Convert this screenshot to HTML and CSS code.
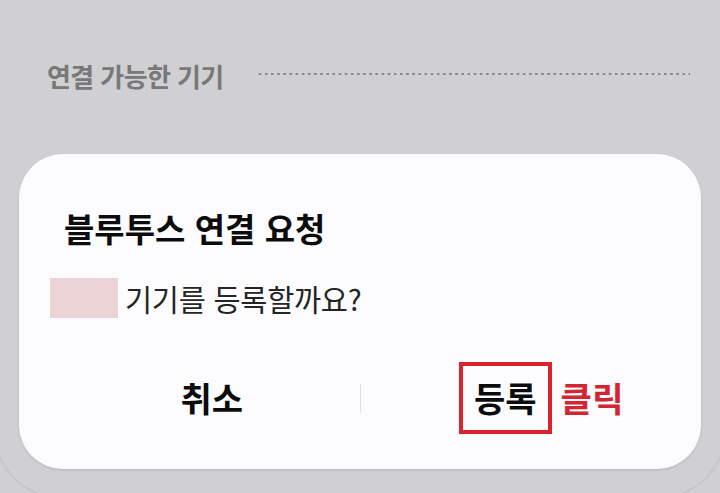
FILE: index.html
```html
<!DOCTYPE html>
<html lang="ko">
<head>
<meta charset="utf-8">
<link rel="stylesheet" href="styles.css">
</head>
<body>
<div class="screen">
  <div class="back-panel"></div>
  <div class="section-head">
    <span class="section-title">연결 가능한 기기</span>
    <span class="dots"></span>
  </div>
  <div class="dialog">
    <div class="dialog-title">블루투스 연결 요청</div>
    <div class="dialog-msg">
      <span class="masked"></span>
      <span class="msg-text">기기를 등록할까요?</span>
    </div>
    <div class="actions">
      <div class="action"><span class="btn">취소</span></div>
      <div class="divider"></div>
      <div class="action"><span class="btn btn-marked">등록<span class="note">클릭</span></span></div>
    </div>
  </div>
</div>
</body>
</html>
```

FILE: styles.css
```css
html, body {
  margin: 0;
  padding: 0;
}
body {
  background: #d0d0d2;
  font-family: "Noto Sans CJK KR", "Noto Sans", sans-serif;
  width: 720px;
  height: 493px;
  overflow: hidden;
}
.screen {
  position: relative;
  width: 720px;
  height: 493px;
  display: flex;
  flex-direction: column;
}
.back-panel {
  position: absolute;
  left: -6px;
  right: -6px;
  top: 0;
  bottom: -5px;
  border-radius: 0 0 70px 70px;
  box-shadow: 0 0 2px rgba(0, 0, 0, 0.2);
  background: #d0d0d2;
}
.section-head {
  position: relative;
  display: flex;
  align-items: center;
  height: 30px;
  margin: 61px 30px 0 47px;
  gap: 33px;
}
.section-title {
  font-size: 26px;
  font-weight: 700;
  color: #78787a;
  letter-spacing: -0.6px;
  line-height: 30px;
  white-space: nowrap;
}
.dots {
  flex: 1;
  height: 4px;
  margin-top: -4px;
  background-image: radial-gradient(circle, #8a8a8c 1.1px, transparent 1.4px);
  background-size: 6.15px 4px;
  background-repeat: repeat-x;
}
.dialog {
  position: relative;
  margin: 63px 0 0 19px;
  width: 682px;
  height: 315px;
  background: #fcfcfe;
  border-radius: 44px;
  box-shadow: 0 1px 3px rgba(0, 0, 0, 0.12);
  display: flex;
  flex-direction: column;
}
.dialog-title {
  padding: 54px 0 0 45px;
  font-size: 33px;
  line-height: 40px;
  font-weight: 700;
  color: #0c0c0c;
  letter-spacing: 0;
}
.dialog-msg {
  display: flex;
  align-items: center;
  margin: 30px 0 0 31px;
  gap: 7px;
}
.masked {
  width: 68px;
  height: 40px;
  background: #ecd3d6;
}
.msg-text {
  font-size: 29.5px;
  line-height: 40px;
  color: #252525;
  letter-spacing: -0.3px;
}
.actions {
  display: flex;
  align-items: center;
  margin-top: 44px;
  padding: 0 45px;
  height: 72px;
}
.action {
  flex: 1;
  display: flex;
  justify-content: center;
  align-items: center;
}
.divider {
  width: 1px;
  height: 29px;
  background: #e2e2e4;
}
.btn {
  font-size: 34px;
  line-height: 40px;
  font-weight: 700;
  color: #0c0c0c;
  letter-spacing: 0;
}
.btn-marked {
  position: relative;
  box-sizing: border-box;
  height: 72px;
  padding: 12px 11px 0 11px;
  border: 4px solid #d9232e;
  margin-left: -6px;
}
.note {
  position: absolute;
  left: calc(100% + 13px);
  top: 12px;
  color: #d42632;
  letter-spacing: 0.5px;
  white-space: nowrap;
}
```
